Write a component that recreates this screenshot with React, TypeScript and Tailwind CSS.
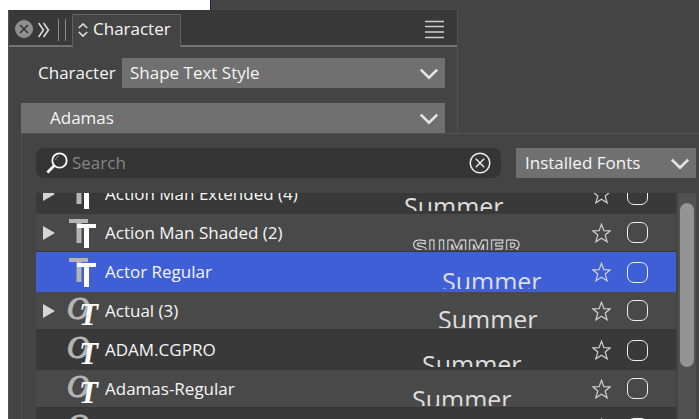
import React, { useState } from 'react';

interface FontRow {
  name: string;
  kind: 'tt' | 'ot';
  family?: boolean;
  shade: string;
  preview?: string;
  previewClass?: string;
}

const DARK = 'h-10 bg-[#393939]';
const LIGHT = 'h-[38px] bg-[#494949] border-b border-[#353535]';
const SELECTED = 'h-10 bg-[#3f5fd7]';

const SAMPLE = 'text-[25px]';
const SHADED = "text-[22px] font-bold font-['DejaVu_Sans',sans-serif] text-transparent [-webkit-text-stroke:1px_#dedede]";

const fonts: FontRow[] = [
  { name: 'Action Man Extended (4)', kind: 'tt', family: true, shade: DARK, preview: 'Summer', previewClass: `mb-[3px] pl-1 pt-5 ${SAMPLE}` },
  { name: 'Action Man Shaded (2)', kind: 'tt', family: true, shade: LIGHT, preview: 'SUMMER', previewClass: `mb-px pl-3 pt-[22px] ${SHADED}` },
  { name: 'Actor Regular', kind: 'tt', shade: SELECTED, preview: 'Summer', previewClass: `mb-[3px] pl-[42px] pt-[17px] ${SAMPLE}` },
  { name: 'Actual (3)', kind: 'ot', family: true, shade: LIGHT, preview: 'Summer', previewClass: `mb-px pl-[38px] pt-[15px] ${SAMPLE}` },
  { name: 'ADAM.CGPRO', kind: 'ot', shade: DARK, preview: 'Summer', previewClass: `mb-[3px] pl-[22px] pt-[22px] ${SAMPLE}` },
  { name: 'Adamas-Regular', kind: 'ot', shade: LIGHT, preview: 'Summer', previewClass: `mb-px pl-3 pt-[17px] ${SAMPLE}` },
  { name: 'Adams', kind: 'ot', shade: DARK },
];

const Chevron: React.FC = () => (
  <svg viewBox="0 0 20 12" className="pointer-events-none absolute top-[10px] right-[6px] h-3 w-5" fill="none">
    <path d="M1.8 1.6 10 9.6 18.2 1.6" stroke="#e6e6e6" strokeWidth="2.6" />
  </svg>
);

const FontKindIcon: React.FC<{ kind: 'tt' | 'ot' }> = ({ kind }) => (
  <svg viewBox="0 0 30 38" className="ml-[13px] h-[38px] w-[30px] shrink-0 overflow-visible" aria-hidden="true">
    {kind === 'tt' ? (
      <>
        <g fill="#b4b4b4">
          <rect x="1" y="5" width="19" height="4" />
          <rect x="8.5" y="5" width="5" height="24" />
        </g>
        <g fill="#ffffff">
          <rect x="9" y="10" width="19" height="4" />
          <rect x="16" y="10" width="5" height="24" />
        </g>
      </>
    ) : (
      <g fontFamily="Liberation Serif, serif" fontStyle="italic">
        <text x="-1" y="27" fontSize="31" fill="#b4b4b4" stroke="#b4b4b4" strokeWidth="1.2">O</text>
        <text x="11" y="33" fontSize="31" fill="#ffffff" fontWeight="700">T</text>
      </g>
    )}
  </svg>
);

const FontItem: React.FC<{ font: FontRow }> = ({ font }) => (
  <li className={`flex shrink-0 items-center pr-7 pl-[7px] ${font.shade}`}>
    {font.family ? (
      <button type="button" aria-label={`Expand ${font.name}`} className="w-3 shrink-0">
        <svg viewBox="0 0 12 14" className="h-[14px] w-3" fill="#d6d6d6">
          <path d="M0 0 12 7 0 14z" />
        </svg>
      </button>
    ) : (
      <span className="w-3 shrink-0" />
    )}
    <FontKindIcon kind={font.kind} />
    <span className="ml-[7px] min-w-0 flex-1 whitespace-nowrap">{font.name}</span>
    <span className={`w-[180px] shrink-0 self-stretch overflow-hidden leading-[25px] text-[#dedede] ${font.previewClass ?? ''}`}>
      {font.preview}
    </span>
    <button type="button" aria-label={`Favorite ${font.name}`} className="ml-3 w-[19px] shrink-0">
      <svg viewBox="0 0 19 20" className="h-5 w-[19px]" fill="none" stroke="#d0d0d0" strokeWidth="1.2">
        <path d="M9.5 1.2 11.9 7.6 18.2 7.8 13.2 12 15.1 18.8 9.5 15.2 3.9 18.8 5.8 12 .8 7.8 7.1 7.6z" />
      </svg>
    </button>
    <input
      type="checkbox"
      aria-label={`Select ${font.name}`}
      className="ml-4 size-[21px] shrink-0 appearance-none rounded-[7px] border border-[#f0f0f0] checked:bg-white/40"
    />
  </li>
);

const App: React.FC = () => {
  const [search, setSearch] = useState('');

  return (
    <div className="relative flex h-screen flex-col overflow-hidden bg-[#444444] font-['Open_Sans','Noto_Sans',sans-serif] text-[17px] leading-6 text-[#f6f6f6]">
      <div className="h-[10px] shrink-0">
        <div className="box-content h-full w-[30%] border-r border-[#1c1464] bg-white" />
      </div>

      <div className="flex min-h-0 flex-1">
        <div className="w-2 shrink-0 bg-white" />
        <section className="w-full max-w-[450px] border-x border-[#525252]">
          <header className="flex h-[37px] border-b-2 border-[#747474] bg-[#393939] pl-[6px]">
            <button type="button" aria-label="Close" className="mt-[10px] size-[18px]">
              <svg viewBox="0 0 18 18" className="size-[18px]">
                <circle cx="9" cy="9" r="9" fill="#909090" />
                <path d="M5 5 13 13M13 5 5 13" stroke="#343434" strokeWidth="1.6" />
              </svg>
            </button>
            <button type="button" aria-label="Collapse" className="mt-3 ml-[5px] h-4 w-3">
              <svg viewBox="0 0 12 16" className="h-4 w-3" fill="none" stroke="#dcdcdc" strokeWidth="1.6">
                <path d="M.6 1 5.4 8 .6 15M5.6 1 10.4 8 5.6 15" />
              </svg>
            </button>
            <span className="mt-[9px] ml-2 h-[22px] w-2 border-x border-[#8a8a8a]" />
            <div className="mt-1 -mb-[2px] ml-[6px] flex h-[33px] w-[109px] gap-[5px] border border-b-0 border-[#626262] bg-[#444444] pl-[5px]">
              <svg viewBox="0 0 10 14" className="mt-2 h-[14px] w-[10px]" fill="none" stroke="#dcdcdc" strokeWidth="1.7">
                <path d="M.8 5 5 1 9.2 5M.8 9 5 13 9.2 9" />
              </svg>
              <h1 className="mt-[2px]">Character</h1>
            </div>
            <button type="button" aria-label="Panel menu" className="mt-[10px] mr-[13px] ml-auto h-5 w-[19px]">
              <svg viewBox="0 0 19 20" className="h-5 w-[19px]" stroke="#cfcfcf" strokeWidth="1.4">
                <path d="M0 1.5H19M0 6.5H19M0 12H19M0 17.5H19" />
              </svg>
            </button>
          </header>

          <div className="mt-[11px] mr-3 flex h-[30px] items-center">
            <label htmlFor="style" className="ml-[29px] w-[84px] shrink-0">Character</label>
            <div className="relative flex-1">
              <select id="style" className="block h-[30px] w-full appearance-none bg-[#707070] pl-2 outline-none">
                <option>Shape Text Style</option>
              </select>
              <Chevron />
            </div>
          </div>

          <div className="relative mt-[15px] mr-3 ml-3">
            <select aria-label="Font" className="block h-[30px] w-full appearance-none bg-[#707070] pl-[29px] outline-none">
              <option>Adamas</option>
            </select>
            <Chevron />
          </div>
        </section>
      </div>

      {/* font picker dropdown */}
      <div className="absolute top-[133px] right-0 bottom-0 left-[21px] flex flex-col border-t border-l border-[#525252] bg-[#444444] pr-[3px] pl-[14px]">
        <div className="mt-[14px] flex h-[30px] shrink-0 gap-[15px]">
          <div className="flex flex-1 items-center rounded-lg bg-[#353535] pr-[10px] pl-[10px]">
            <svg viewBox="0 0 24 24" className="size-6 shrink-0" fill="none" stroke="#ffffff">
              <circle cx="13.5" cy="9.5" r="7.2" strokeWidth="1.8" />
              <path d="M8.4 14.6 1.4 21.4" strokeWidth="2.8" />
              <path d="M9.5 9A4.5 4.5 0 0 1 13 5" strokeWidth="0.8" stroke="#9a9a9a" />
            </svg>
            <input
              type="text"
              aria-label="Search fonts"
              placeholder="Search"
              value={search}
              onChange={(e) => setSearch(e.target.value)}
              className="ml-[2px] min-w-0 flex-1 bg-transparent outline-none placeholder:text-[#858585]"
            />
            <button type="button" aria-label="Clear search" onClick={() => setSearch('')} className="size-[22px] shrink-0">
              <svg viewBox="0 0 22 22" className="size-[22px]" fill="none" stroke="#ececec" strokeWidth="1.5">
                <circle cx="11" cy="11" r="9.8" />
                <path d="M6.8 6.8 15.2 15.2M15.2 6.8 6.8 15.2" />
              </svg>
            </button>
          </div>
          <div className="relative w-[180px]">
            <select aria-label="Font source" className="block h-[30px] w-full appearance-none bg-[#707070] pl-[9px] outline-none">
              <option>Installed Fonts</option>
            </select>
            <Chevron />
          </div>
        </div>

        <div className="mt-[15px] flex min-h-0 flex-1 gap-[2px]">
          <div className="min-w-0 flex-1 overflow-hidden">
            <ul className="-mt-[19px] flex flex-col">
              {fonts.map((font) => (
                <FontItem key={font.name} font={font} />
              ))}
            </ul>
          </div>
          <div className="w-[18px] bg-[#515151] px-[2px] pt-[10px]">
            <div className="h-[164px] rounded-full bg-[#949494]" />
          </div>
        </div>
      </div>
    </div>
  );
};

export default App;
